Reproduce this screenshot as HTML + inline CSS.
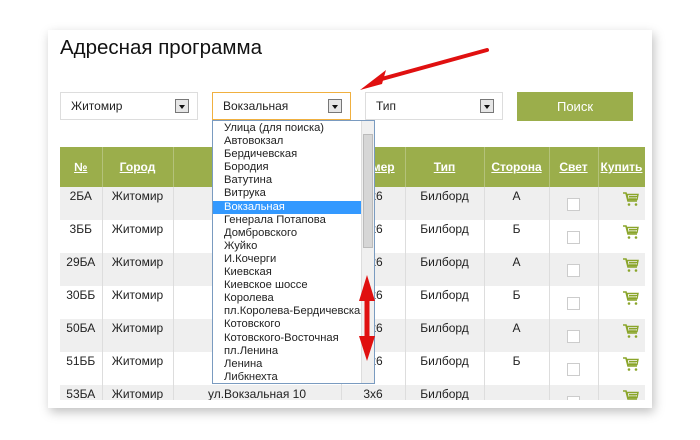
<!DOCTYPE html>
<html><head><meta charset="utf-8"><style>
*{margin:0;padding:0;box-sizing:border-box}
body{width:700px;height:440px;background:#fff;position:relative;overflow:hidden;font-family:"Liberation Sans","DejaVu Sans",sans-serif;color:#222}
.a{position:absolute}
.card{left:48px;top:30px;width:604px;height:378px;background:#fff;box-shadow:2px 4px 10px rgba(0,0,0,.25)}
h1{position:absolute;left:60px;top:36px;font-size:20.5px;font-weight:normal;color:#111}
.sel{position:absolute;height:28px;border:1px solid #ddd;background:#fff;font-size:12px;line-height:26px;padding-left:10px}
.sel i{position:absolute;right:8px;top:6px;width:14px;height:14px;border:1px solid #777;background:#e6e6e6}
.sel i:after{content:"";position:absolute;left:3px;top:5px;border:3px solid transparent;border-top:4px solid #111}
.btn{left:517px;top:92px;width:116px;height:29px;background:#9bae4b;color:#fff;font-size:13px;text-align:center;line-height:29px}
.tw{position:absolute;left:60px;top:147px;width:585px;height:253px;overflow:hidden}
table{border-collapse:collapse;font-size:12px;width:585px;table-layout:fixed}
th{background:#9bae4b;color:#fff;height:40px;text-decoration:underline;font-weight:bold;border-right:1px solid #b4c27a;font-size:12px}
td{height:33px;vertical-align:top;padding-top:2px;text-align:center;border-right:1px solid #ddd}
tr.g td{background:#efefef}
.cb{display:inline-block;width:13px;height:13px;border:1px solid #ccc;background:#fff;margin-top:9px}
td.cart{text-align:right;padding-right:6px;padding-top:4px}
.list{left:212px;top:120px;width:163px;height:264px;border:1px solid #7a9bc0;background:#fff;font-size:11.2px;color:#222}
.list div{height:13.1px;line-height:13px;padding-left:11px;white-space:nowrap}
.list .h{background:#3399ff;color:#fff;margin-right:13px}
.sb{left:361px;top:121px;width:13px;height:262px;background:#f0f0f0;border-left:1px solid #ddd}
.th{left:363px;top:134px;width:10px;height:114px;background:#d6d6d6;border:1px solid #bbb}
</style></head><body>
<svg width="0" height="0" style="position:absolute"><defs><symbol id="c" viewBox="0 0 16 16"><path d="M0 2h3l2 8h9" fill="none" stroke="#8aa52a" stroke-width="1.6"/><path d="M4 3.5h11l-1 5H5z" fill="none" stroke="#8aa52a" stroke-width="1.4"/><path d="M6 5.5h8M6 7h7" stroke="#8aa52a" stroke-width="1"/><circle cx="6" cy="13.5" r="1.3" fill="#8aa52a"/><circle cx="13" cy="13.5" r="1.3" fill="#8aa52a"/></symbol></defs></svg>
<div class="a card"></div>
<h1>Адресная программа</h1>
<div class="sel" style="left:60px;top:92px;width:138px">Житомир<i></i></div>
<div class="sel" style="left:212px;top:92px;width:139px;border-color:#f0b040">Вокзальная<i></i></div>
<div class="sel" style="left:365px;top:92px;width:138px">Тип<i></i></div>
<div class="a btn">Поиск</div>
<div class="tw"><table>
<colgroup><col style="width:42px"><col style="width:71px"><col style="width:168px"><col style="width:64px"><col style="width:79px"><col style="width:65px"><col style="width:49px"><col style="width:47px"></colgroup>
<tr><th>№</th><th>Город</th><th>Улица</th><th>Размер</th><th>Тип</th><th>Сторона</th><th>Свет</th><th>Купить</th></tr>
<tr class="g"><td>2БА</td><td>Житомир</td><td></td><td>3x6</td><td>Билборд</td><td>А</td><td><span class="cb"></span></td><td class="cart"><svg width="16" height="16"><use href="#c"/></svg></td></tr>
<tr><td>3ББ</td><td>Житомир</td><td></td><td>3x6</td><td>Билборд</td><td>Б</td><td><span class="cb"></span></td><td class="cart"><svg width="16" height="16"><use href="#c"/></svg></td></tr>
<tr class="g"><td>29БА</td><td>Житомир</td><td>ул.В</td><td>3x6</td><td>Билборд</td><td>А</td><td><span class="cb"></span></td><td class="cart"><svg width="16" height="16"><use href="#c"/></svg></td></tr>
<tr><td>30ББ</td><td>Житомир</td><td>ул.В</td><td>3x6</td><td>Билборд</td><td>Б</td><td><span class="cb"></span></td><td class="cart"><svg width="16" height="16"><use href="#c"/></svg></td></tr>
<tr class="g"><td>50БА</td><td>Житомир</td><td>ул.В</td><td>3x6</td><td>Билборд</td><td>А</td><td><span class="cb"></span></td><td class="cart"><svg width="16" height="16"><use href="#c"/></svg></td></tr>
<tr><td>51ББ</td><td>Житомир</td><td>ул.В</td><td>3x6</td><td>Билборд</td><td>Б</td><td><span class="cb"></span></td><td class="cart"><svg width="16" height="16"><use href="#c"/></svg></td></tr>
<tr class="g"><td>53БА</td><td>Житомир</td><td>ул.Вокзальная 10</td><td>3x6</td><td>Билборд</td><td></td><td><span class="cb"></span></td><td class="cart"><svg width="16" height="16"><use href="#c"/></svg></td></tr>
</table></div>
<div class="a list">
<div style="margin-top:1px">Улица (для поиска)</div><div>Автовокзал</div><div>Бердичевская</div><div>Бородия</div><div>Ватутина</div><div>Витрука</div><div class="h">Вокзальная</div><div>Генерала Потапова</div><div>Домбровского</div><div>Жуйко</div><div>И.Кочерги</div><div>Киевская</div><div>Киевское шоссе</div><div>Королева</div><div>пл.Королева-Бердичевская</div><div>Котовского</div><div>Котовского-Восточная</div><div>пл.Ленина</div><div>Ленина</div><div>Либкнехта</div>
</div>
<div class="a sb"></div><div class="a th"></div>
<svg class="a" style="left:0;top:0" width="700" height="440">
<path d="M487 50 L378 80" stroke="#e01010" stroke-width="4" stroke-linecap="round"/>
<path d="M360 90 L386 70 L382 84 Z" fill="#e01010"/>
<path d="M367 295 L367 342" stroke="#e01010" stroke-width="5"/>
<path d="M367 275 L359 301 L375 301 Z M367 361 L359 336 L375 336 Z" fill="#e01010"/>
</svg>
</body></html>
